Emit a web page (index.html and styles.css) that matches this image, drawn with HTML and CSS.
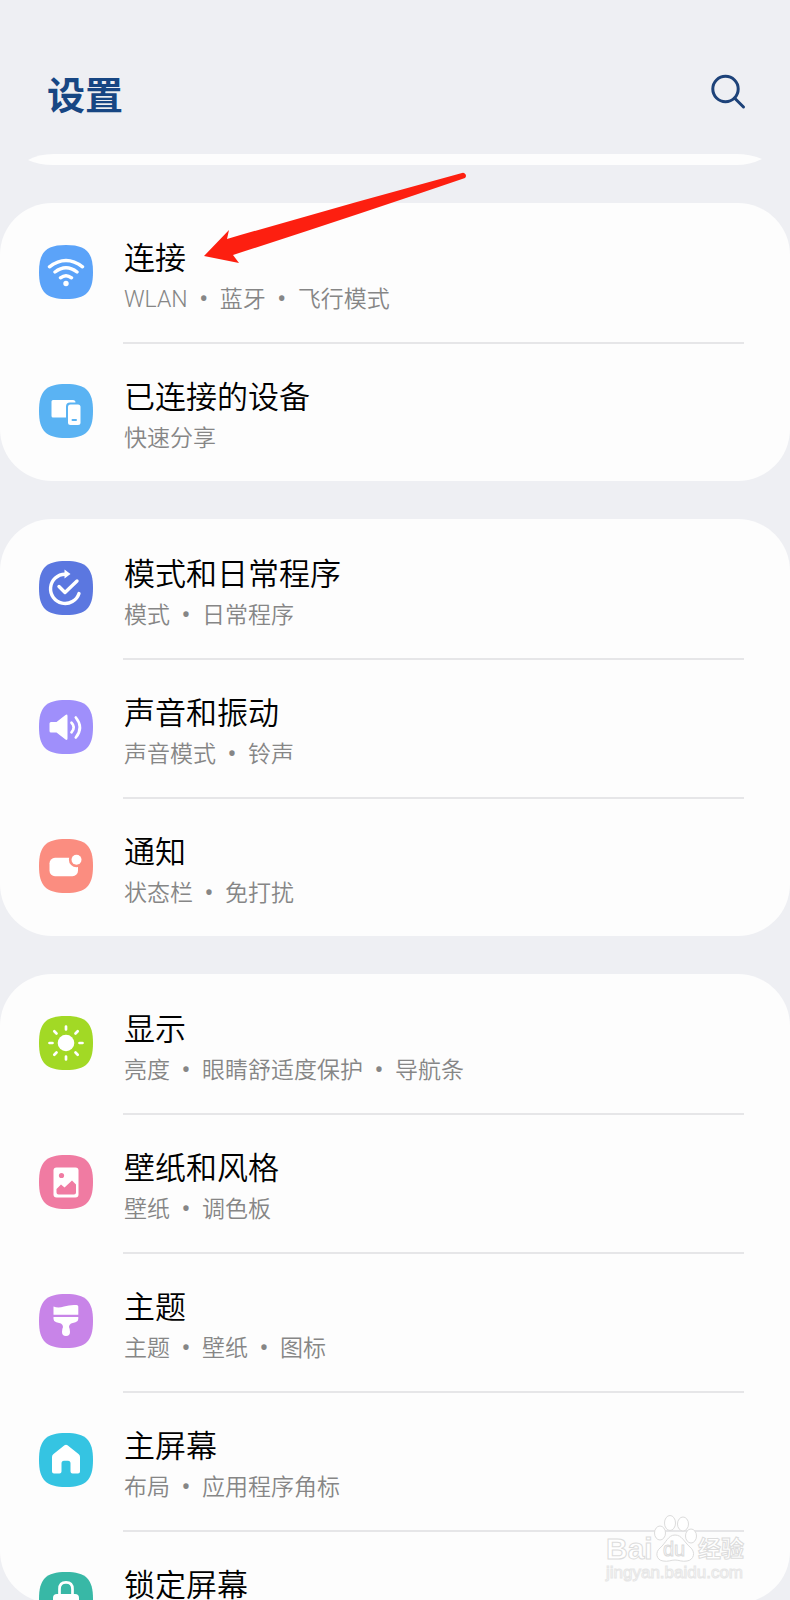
FILE: index.html
```
<!DOCTYPE html>
<html lang="zh-CN">
<head>
    <meta charset="UTF-8">
    <meta name="viewport" content="width=device-width, initial-scale=1.0">
    <title>设置</title>
    <link rel="stylesheet" href="styles.css">
</head>
<body>
    <header class="header">
        <h1>设置</h1>
        <button type="button" class="search-button" aria-label="搜索">
            <svg viewBox="0 0 36 36">
                <circle cx="15.500" cy="15" r="12.700"/>
                <path d="M24.500 24L33.500 33"/>
            </svg>
        </button>
    </header>

    <main class="list">
        <svg class="card-edge" viewBox="0 0 734 11" preserveAspectRatio="none">
            <path d="M0 6Q10 0 26 0H708Q722 0 734 5Q722 11 708 11H26Q10 11 0 6Z"/>
        </svg>

        <section class="card">
            <a href="#" class="row">
                <svg class="icon blue" viewBox="0 0 54 54">
                    <path class="shape" d="M27 0C47 0 54 7 54 27S47 54 27 54 0 47 0 27 7 0 27 0Z"/>
                    <path class="line" d="M10.500 21.800Q27 9 43.500 21.800M16 27Q27 18.500 38 27M21.500 32.800Q27 28.500 32.500 32.800"/>
                    <circle class="fill" cx="27" cy="38.500" r="2.700"/>
                </svg>
                <div class="text">
                    <h2>连接</h2>
                    <p>WLAN<span class="dot">•</span>蓝牙<span class="dot">•</span>飞行模式</p>
                </div>
            </a>
            <a href="#" class="row">
                <svg class="icon sky" viewBox="0 0 54 54">
                    <path class="shape" d="M27 0C47 0 54 7 54 27S47 54 27 54 0 47 0 27 7 0 27 0Z"/>
                    <path class="fill" d="M14 16H34Q36.500 16 36.500 18.500H31Q27 18.500 27 22.500V33.500H14Q12.500 33.500 12.500 32V17.500Q12.500 16 14 16Z"/>
                    <rect class="fill" x="29" y="20.500" width="12.500" height="20.500" rx="2.500"/>
                    <path class="cut" d="M33.500 36H37"/>
                </svg>
                <div class="text">
                    <h2>已连接的设备</h2>
                    <p>快速分享</p>
                </div>
            </a>
        </section>

        <section class="card">
            <a href="#" class="row">
                <svg class="icon indigo" viewBox="0 0 54 54">
                    <path class="shape" d="M27 0C47 0 54 7 54 27S47 54 27 54 0 47 0 27 7 0 27 0Z"/>
                    <path class="line" d="M26 13.300A14.600 14.600 0 1 0 40 32.500M20 25.500L26 31.500L38 20"/>
                    <path class="fill" d="M25.500 8.500L31.500 13L25.500 17.500Z"/>
                </svg>
                <div class="text">
                    <h2>模式和日常程序</h2>
                    <p>模式<span class="dot">•</span>日常程序</p>
                </div>
            </a>
            <a href="#" class="row">
                <svg class="icon violet" viewBox="0 0 54 54">
                    <path class="shape" d="M27 0C47 0 54 7 54 27S47 54 27 54 0 47 0 27 7 0 27 0Z"/>
                    <path class="fill" d="M12 22H17.500L26.500 15Q28.500 13.800 28.500 16V38.500Q28.500 40.700 26.500 39.500L17.500 32.500H12Q10.500 32.500 10.500 31V23.500Q10.500 22 12 22Z"/>
                    <path class="line thin" d="M32.500 22.800Q37 27.300 32.500 32.300M36.800 17.500Q45 27.500 36.800 37.500"/>
                </svg>
                <div class="text">
                    <h2>声音和振动</h2>
                    <p>声音模式<span class="dot">•</span>铃声</p>
                </div>
            </a>
            <a href="#" class="row">
                <svg class="icon coral" viewBox="0 0 54 54">
                    <path class="shape" d="M27 0C47 0 54 7 54 27S47 54 27 54 0 47 0 27 7 0 27 0Z"/>
                    <rect class="fill" x="10.500" y="18.800" width="28.500" height="18.400" rx="5.500"/>
                    <circle class="shape" cx="37.500" cy="20.700" r="7.600"/>
                    <circle class="fill" cx="37.500" cy="20.700" r="5"/>
                </svg>
                <div class="text">
                    <h2>通知</h2>
                    <p>状态栏<span class="dot">•</span>免打扰</p>
                </div>
            </a>
        </section>

        <section class="card card-last">
            <a href="#" class="row">
                <svg class="icon green" viewBox="0 0 54 54">
                    <path class="shape" d="M27 0C47 0 54 7 54 27S47 54 27 54 0 47 0 27 7 0 27 0Z"/>
                    <circle class="fill" cx="27" cy="27" r="8.300"/>
                    <path class="line thin" d="M27 10.500V13.500M27 40.500V43.500M10.500 27H13.500M40.500 27H43.500M15.300 15.300L17.500 17.500M36.500 36.500L38.700 38.700M15.300 38.700L17.500 36.500M36.500 17.500L38.700 15.300"/>
                </svg>
                <div class="text">
                    <h2>显示</h2>
                    <p>亮度<span class="dot">•</span>眼睛舒适度保护<span class="dot">•</span>导航条</p>
                </div>
            </a>
            <a href="#" class="row">
                <svg class="icon pink" viewBox="0 0 54 54">
                    <path class="shape" d="M27 0C47 0 54 7 54 27S47 54 27 54 0 47 0 27 7 0 27 0Z"/>
                    <rect class="fill" x="14.500" y="12.500" width="25" height="30" rx="3"/>
                    <circle class="shape" cx="22.500" cy="20.500" r="2.600"/>
                    <path class="shape" d="M17.500 34L22 29.500L25.500 32.500L33 25.500L37 29.500V37.500Q37 39.500 35 39.500H19.500Q17.500 39.500 17.500 37.500Z"/>
                </svg>
                <div class="text">
                    <h2>壁纸和风格</h2>
                    <p>壁纸<span class="dot">•</span>调色板</p>
                </div>
            </a>
            <a href="#" class="row">
                <svg class="icon purple" viewBox="0 0 54 54">
                    <path class="shape" d="M27 0C47 0 54 7 54 27S47 54 27 54 0 47 0 27 7 0 27 0Z"/>
                    <path class="fill" d="M14.500 12.500Q19 14.500 25 12.500T37.500 11Q39.300 11 39.300 12.500V20.700H14.500Z"/>
                    <path class="fill" d="M14.500 23H39.300V25Q39.300 27.500 36.500 28.300L32 29.500Q30 30.500 30 33Q31 35 31 38Q31 42 27 42T23 38Q23 35 24 33Q24 30.500 22 29.500L17.300 28.300Q14.500 27.500 14.500 25Z"/>
                </svg>
                <div class="text">
                    <h2>主题</h2>
                    <p>主题<span class="dot">•</span>壁纸<span class="dot">•</span>图标</p>
                </div>
            </a>
            <a href="#" class="row">
                <svg class="icon cyan" viewBox="0 0 54 54">
                    <path class="shape" d="M27 0C47 0 54 7 54 27S47 54 27 54 0 47 0 27 7 0 27 0Z"/>
                    <path class="fill" d="M25.500 12.300Q27 11 28.500 12.300L39.500 21Q41 22.200 41 24V38.500Q41 40.500 39 40.500H33.500Q31.500 40.500 31.500 38.500V30.500Q31.500 27.800 29 27.800H25Q22.500 27.800 22.500 30.500V38.500Q22.500 40.500 20.500 40.500H15Q13 40.500 13 38.500V24Q13 22.200 14.500 21Z"/>
                </svg>
                <div class="text">
                    <h2>主屏幕</h2>
                    <p>布局<span class="dot">•</span>应用程序角标</p>
                </div>
            </a>
            <a href="#" class="row">
                <svg class="icon teal" viewBox="0 0 54 54">
                    <path class="shape" d="M27 0C47 0 54 7 54 27S47 54 27 54 0 47 0 27 7 0 27 0Z"/>
                    <path class="line thin" d="M20.500 24V17Q20.500 10.300 27 10.300T33.500 17V24"/>
                    <rect class="fill" x="14" y="22" width="26" height="20" rx="4"/>
                </svg>
                <div class="text">
                    <h2>锁定屏幕</h2>
                </div>
            </a>
        </section>
    </main>

    <!-- Panah penunjuk -->
    <svg class="arrow" viewBox="0 0 264 92">
        <path d="M0 84L25 58L23 67Q140 33 258 1A3 3 0 0 1 261 6Q150 44 29 83L35 91Z"/>
    </svg>

    <!-- Watermark -->
    <svg class="watermark" viewBox="0 0 144 70">
        <ellipse cx="55" cy="22" rx="5.500" ry="7"/>
        <ellipse cx="65" cy="12" rx="5.500" ry="7.500"/>
        <ellipse cx="78" cy="13" rx="5.500" ry="7"/>
        <ellipse cx="86" cy="25" rx="5.500" ry="7"/>
        <path d="M70 24C77 24 79 31 85 36C91 41 89 49 82 50C77 51 74 49 70 49S63 51 58 50C51 49 50 41 55 37C61 32 63 24 70 24Z"/>
        <text class="wm-brand" x="1" y="48">Bai</text>
        <text class="wm-du" x="58" y="45">du</text>
        <text class="wm-cn" x="93" y="46">经验</text>
        <text class="wm-url" x="1" y="67">jingyan.baidu.com</text>
    </svg>
</body>
</html>
```
FILE: styles.css
```
* {
    box-sizing: border-box;
}
body {
    font-family: Roboto, "Noto Sans CJK SC", sans-serif;
    margin: 0;
    height: 100vh;
    display: flex;
    flex-direction: column;
    position: relative;
    overflow: hidden;
    background-color: #eeeff3;
}
h1, h2, p {
    margin: 0;
}
.header {
    display: flex;
    justify-content: space-between;
    align-items: flex-start;
    height: 154px;
    padding: 68px 44px 0 47px;
    flex-shrink: 0;
}
.header h1 {
    font-size: 38px;
    line-height: 56px;
    font-weight: 700;
    color: #174683;
}
.search-button {
    width: 36px;
    height: 36px;
    margin-top: 6px;
    padding: 0;
    border: none;
    background: none;
    cursor: pointer;
}
.search-button svg {
    display: block;
    fill: none;
    stroke: #1d4279;
    stroke-width: 3;
    stroke-linecap: round;
}

/* Daftar menu */
.list {
    display: flex;
    flex-direction: column;
    gap: 38px;
}
.card-edge {
    height: 11px;
    margin: 0 28px;
    fill: #fdfdfd;
}
.card {
    border-radius: 52px;
    background-color: #fdfdfd;
}
.card-last .row:last-child {
    height: 73px;
}
.row {
    display: flex;
    align-items: flex-start;
    gap: 30px;
    height: 139px;
    padding: 0 46px 0 39px;
    color: #000;
    text-decoration: none;
}
.text {
    flex: 1;
    padding: 35px 0 0 1px;
}
.row + .row .text {
    padding-top: 33px;
    border-top: 2px solid #e6e6e8;
}
.text h2 {
    font-size: 31px;
    line-height: 42px;
    font-weight: 350;
    white-space: nowrap;
}
.text p {
    font-size: 23px;
    line-height: 40px;
    font-weight: 350;
    color: #868686;
    white-space: nowrap;
}
.dot {
    display: inline-block;
    width: 32px;
    font-weight: 700;
    text-align: center;
}

/* Ikon */
.icon {
    width: 54px;
    height: 54px;
    margin-top: 42px;
    flex-shrink: 0;
}
.icon .shape {
    fill: currentColor;
}
.icon .fill {
    fill: #fff;
}
.icon .line {
    fill: none;
    stroke: #fff;
    stroke-width: 3.4;
    stroke-linecap: round;
    stroke-linejoin: round;
}
.icon .thin {
    stroke-width: 2.7;
}
.icon .cut {
    stroke: currentColor;
    stroke-width: 2;
    stroke-linecap: round;
}
.blue { color: #5ba3f9; }
.sky { color: #5ab3f3; }
.indigo { color: #5b77e0; }
.violet { color: #9f8ffb; }
.coral { color: #fb8d80; }
.green { color: #a2d925; }
.pink { color: #f07ba2; }
.purple { color: #c884e8; }
.cyan { color: #35c4e2; }
.teal { color: #38b8a6; }

.arrow {
    position: absolute;
    left: 204px;
    top: 172px;
    width: 264px;
    fill: #fd1f10;
    pointer-events: none;
}
.watermark {
    position: absolute;
    right: 41px;
    bottom: 19px;
    width: 144px;
    height: 70px;
    overflow: visible;
    fill: #fff;
    stroke: #dcdcdc;
    stroke-width: 1;
    pointer-events: none;
}
.wm-brand {
    font: 700 30px "Liberation Sans", sans-serif;
}
.wm-du {
    font: 400 20px "Liberation Sans", sans-serif;
}
.wm-cn {
    font: 700 23px "Noto Sans CJK SC", sans-serif;
}
.wm-url {
    font: 400 17px "Liberation Sans", sans-serif;
    stroke: #e6e6e6;
}
```
